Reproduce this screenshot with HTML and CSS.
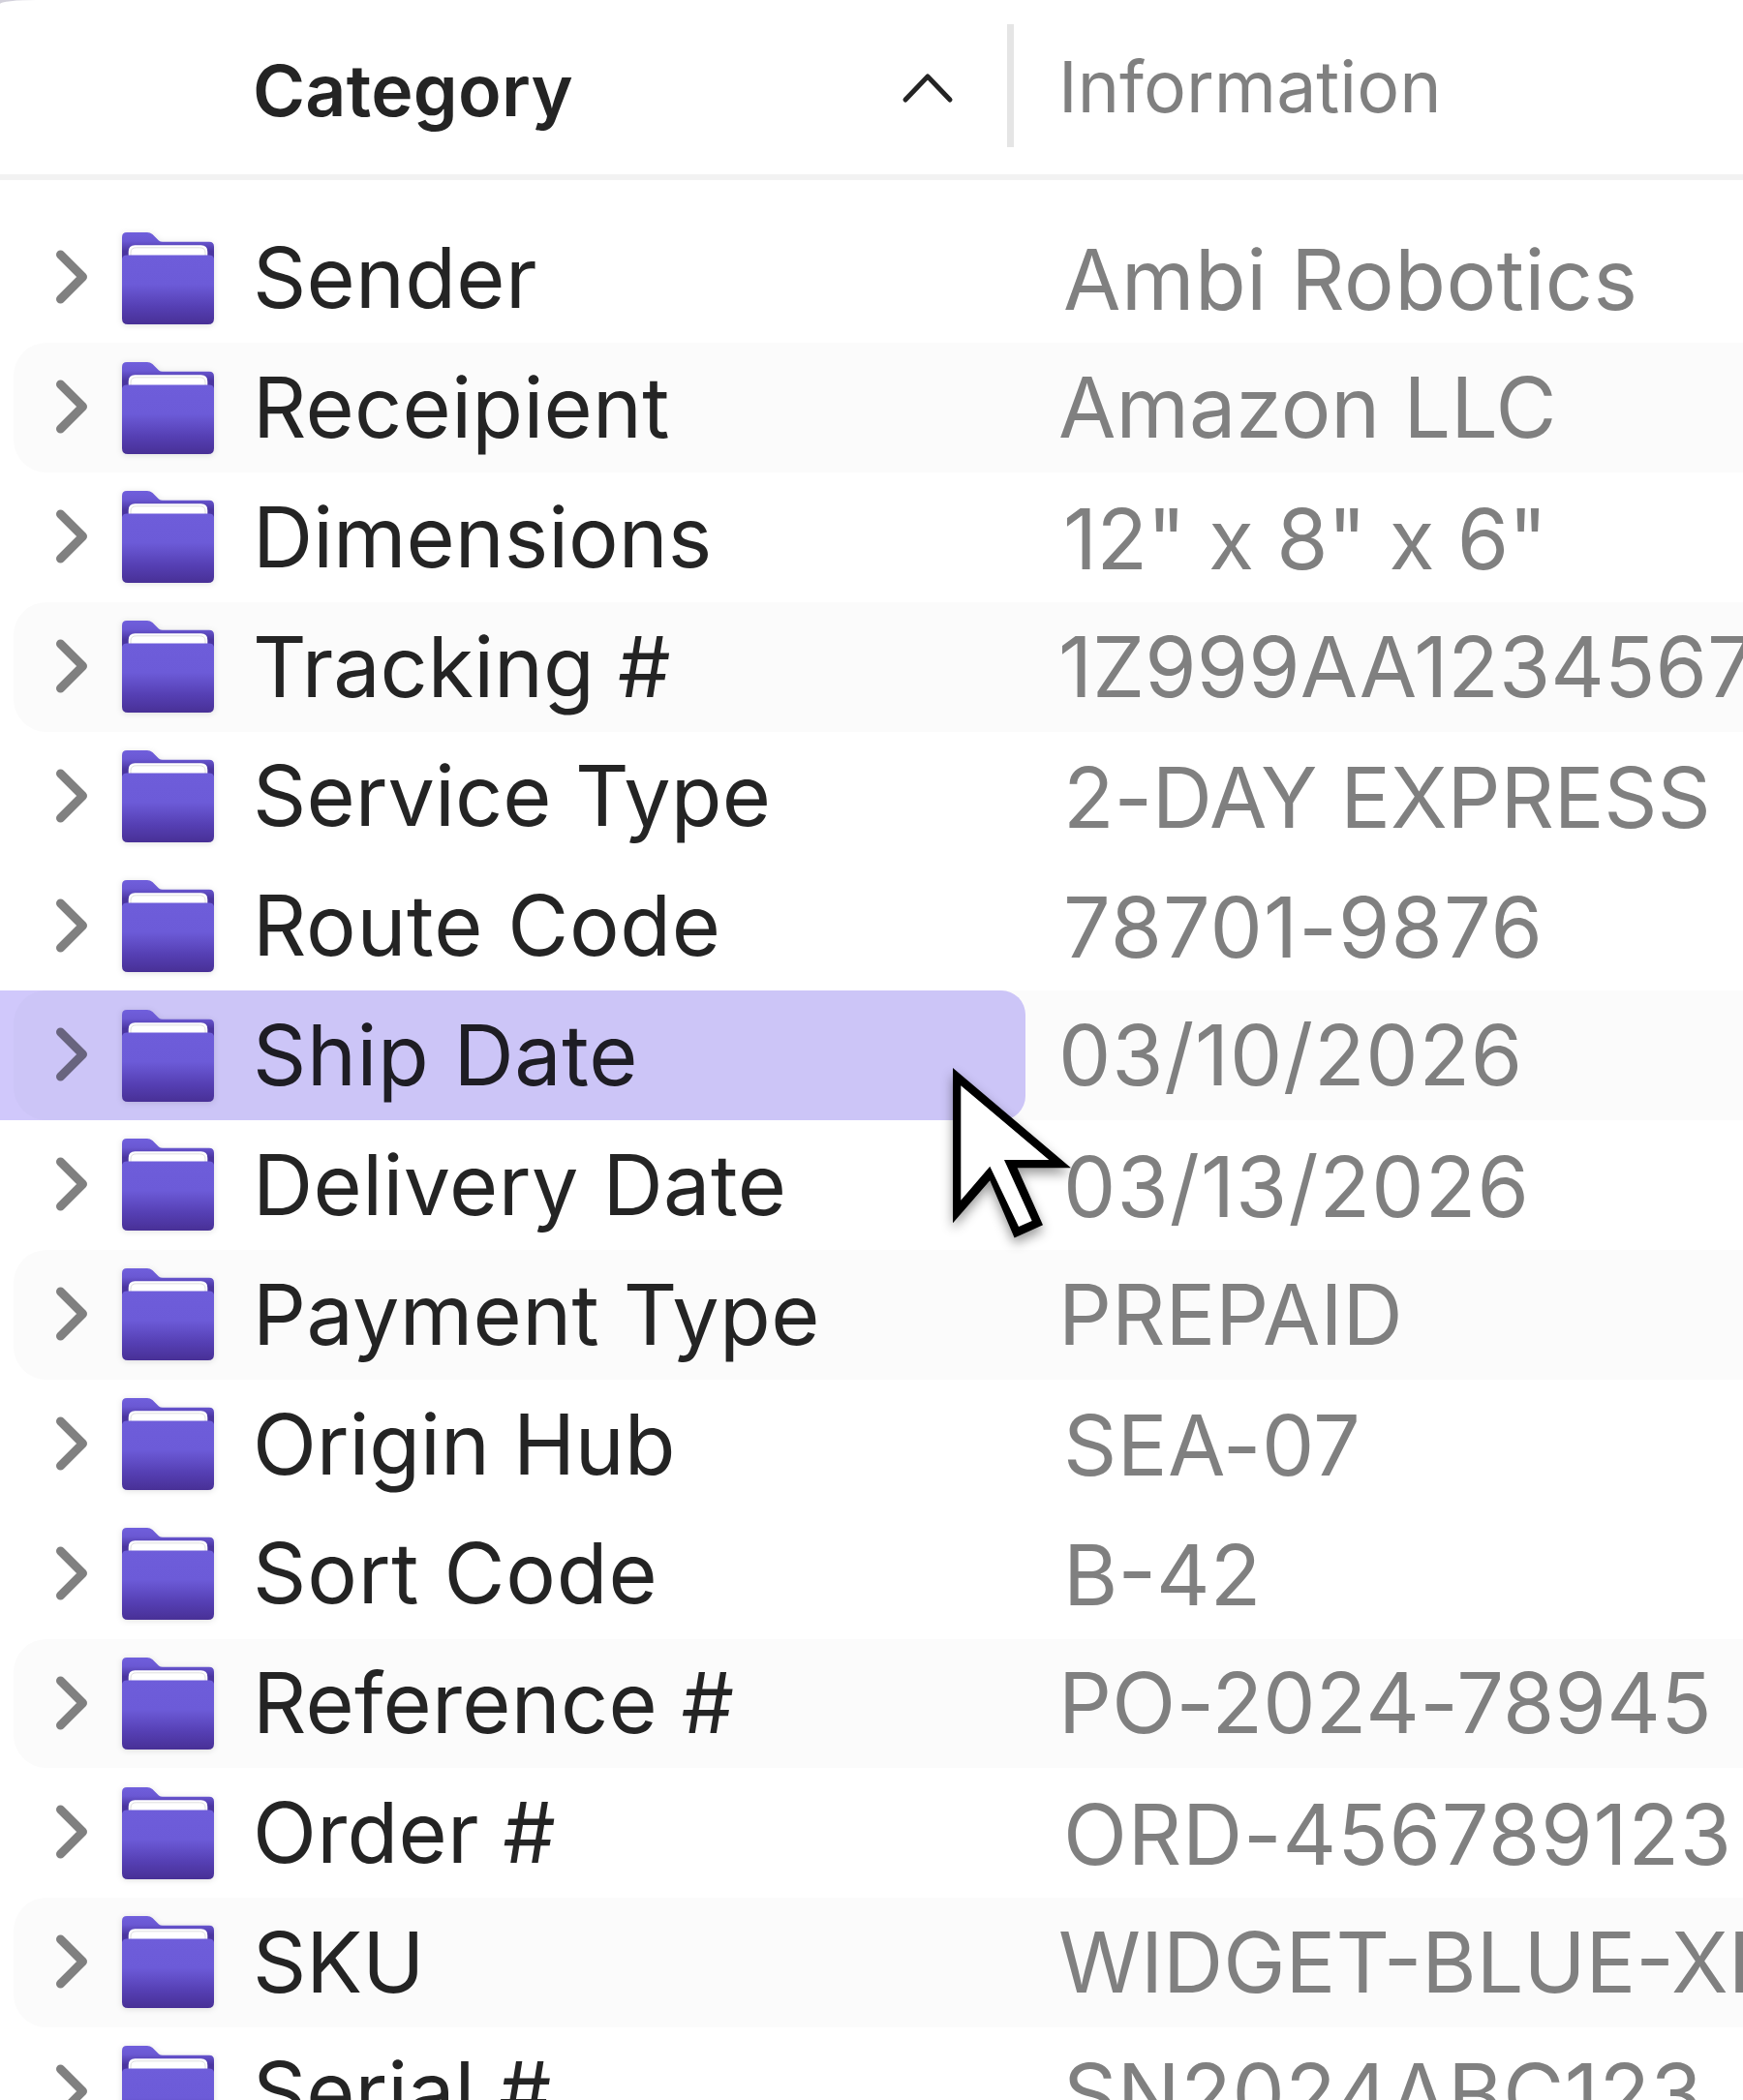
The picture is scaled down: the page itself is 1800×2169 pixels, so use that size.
FILE: index.html
```html
<!DOCTYPE html>
<html lang="en">
<head>
    <meta charset="UTF-8">
    <meta name="viewport" content="width=device-width, initial-scale=1.0">
    <title>Shipment details</title>
    <link rel="stylesheet" href="styles.css">
</head>
<body>
    <!-- shared icons -->
    <svg class="sprite" width="0" height="0">
        <defs>
            <linearGradient id="back" x1="0" y1="0" x2="0" y2="1">
                <stop offset="0" stop-color="#705fdc"/>
                <stop offset="0.3" stop-color="#6a58d3"/>
                <stop offset="0.65" stop-color="#4a35a0"/>
            </linearGradient>
            <linearGradient id="front" x1="0" y1="0" x2="0" y2="1">
                <stop offset="0" stop-color="#6e5dda"/>
                <stop offset="0.42" stop-color="#6c5bd8"/>
                <stop offset="0.75" stop-color="#553fb3"/>
                <stop offset="1" stop-color="#483096"/>
            </linearGradient>
            <symbol id="chevron" viewBox="0 0 34 58">
                <path d="M5.5 6 L28.5 29 L5.5 52" fill="none" stroke="currentColor" stroke-width="9" stroke-linecap="round" stroke-linejoin="round"/>
            </symbol>
            <symbol id="folder" viewBox="0 0 95 95">
                <path d="M0 30 V5 Q0 0 5 0 H26 Q29 0 31.500 2 L38 8.500 Q39.500 9.700 42 9.700 H90 Q95 9.700 95 14.700 V30 Z" fill="url(#back)"/>
                <path d="M6.700 30 V20 Q6.700 13.300 13.400 13.300 H81.600 Q88.300 13.300 88.300 20 V30 Z" fill="#fff"/>
                <path d="M9 30 V21 Q9 15.800 14.500 15.800 H80.500 Q86 15.800 86 21 V30" fill="none" stroke="#dedede" stroke-width="1"/>
                <path d="M0 27 Q1 23.600 5 23.600 H90 Q94 23.600 95 27 V89 Q95 95 89 95 H6 Q0 95 0 89 Z" fill="url(#front)"/>
            </symbol>
        </defs>
    </svg>

    <main class="panel">
        <header class="head">
            <div class="head-category">
                <span>Category</span>
                <svg class="sort" viewBox="0 0 54 32"><path d="M4 28 L27 4 L50 28" fill="none" stroke="#242424" stroke-width="5" stroke-linecap="round" stroke-linejoin="round"/></svg>
            </div>
            <div class="head-info">Information</div>
        </header>

        <div class="rows" id="rows"></div>

        <svg class="cursor" viewBox="0 0 122 176">
            <path d="M0 0 L122 103.300 H66.600 L93 162.300 L63.600 175.600 L38.300 116.300 L0 160.300 Z" fill="#000"/>
            <path d="M8.300 18.300 L99.300 95 H53 L81.700 158 L68 164 L38.300 101.700 L8.300 136.700 Z" fill="#fff"/>
        </svg>
    </main>

    <script>
        // name, info, letter spacing of each (px), row state
        const items = [
            ["Sender", "Ambi Robotics", 0.28, 0.5],
            ["Receipient", "Amazon LLC", 0.3, 0, "shaded"],
            ["Dimensions", "12\" x 8\" x 6\"", 0, -0.5],
            ["Tracking #", "1Z999AA12345678", 0, 0.05, "shaded"],
            ["Service Type", "2-DAY EXPRESS", 0.08, -0.17],
            ["Route Code", "78701-9876", 0.75, 1.1],
            ["Ship Date", "03/10/2026", 0.65, 0.8, "shaded selected"],
            ["Delivery Date", "03/13/2026", 0.42, 1.1],
            ["Payment Type", "PREPAID", 0.37, 0, "shaded"],
            ["Origin Hub", "SEA-07", -0.08, 0.4],
            ["Sort Code", "B-42", 0.85, 0],
            ["Reference #", "PO-2024-78945", 0.25, 0.25, "shaded"],
            ["Order #", "ORD-456789123", 0.25, 0.85],
            ["SKU", "WIDGET-BLUE-XL", 0, 0, "shaded"],
            ["Serial #", "SN2024ABC123", 0, 0.55]
        ];

        document.getElementById("rows").innerHTML = items.map(([name, info, nameGap, infoGap, state = ""]) => `
            <div class="row ${state}">
                <div class="category">
                    <svg class="chevron"><use href="#chevron"/></svg>
                    <svg class="folder"><use href="#folder"/></svg>
                    <span class="name" style="letter-spacing: ${nameGap}px">${name}</span>
                </div>
                <div class="info" style="letter-spacing: ${infoGap}px">${info}</div>
            </div>`).join("");
    </script>
</body>
</html>
```
FILE: styles.css
```css
* {
    box-sizing: border-box;
}

body {
    margin: 0;
    height: 2169px;
    overflow: hidden;
    background: #d2d0da;
    font-family: Inter, "Liberation Sans", sans-serif;
    color: #242424;
}

.sprite {
    position: absolute;
}

.panel {
    position: relative;
    height: 2169px;
    overflow: hidden;
    background: #fff;
    border-top-left-radius: 38px 4px;
}

.head {
    display: flex;
    height: 186px;
    padding-top: 25px;
    border-bottom: 6px solid #f2f2f2;
    font-size: 73.4px;
    line-height: 90px;
    white-space: nowrap;
}

.head-category {
    display: flex;
    justify-content: space-between;
    width: 1047px;
    height: 127px;
    padding: 24px 55px 0 261px;
    border-right: 7px solid #e5e5e5;
    font-weight: 600;
    letter-spacing: 0.25px;
}

.sort {
    width: 54px;
    height: 32px;
    margin-top: 26px;
}

.head-info {
    padding: 20px 0 0 46px;
    color: #808080;
}

.rows {
    padding-top: 34.500px;
}

.row {
    display: flex;
    height: 133.830px;
    font-size: 86.200px;
    line-height: 104px;
    white-space: nowrap;
    isolation: isolate;
}

.shaded {
    background: #fbfbfb;
    margin-left: 14px;
    border-radius: 34px 0 0 34px;
}

.category {
    position: relative;
    display: flex;
    flex: none;
    width: 1059px;
    padding-left: 57px;
}

.shaded .category {
    width: 1045px;
    padding-left: 43px;
}

.chevron {
    width: 34px;
    height: 58px;
    margin-top: 36.900px;
    color: #808080;
}

.folder {
    position: relative;
    z-index: 2;
    width: 95px;
    height: 95px;
    margin: 19.200px 0 0 35px;
    filter: drop-shadow(0 1px 3px rgba(0, 0, 0, 0.12));
}

.name {
    padding: 14.600px 0 0 40px;
}

.info {
    padding: 16.500px 0 0 39px;
    color: #808080;
}

.shaded .info {
    padding: 14.600px 0 0 34px;
}

/* highlight tints the row and its text, the folder stays on top */
.selected .category::after {
    content: "";
    position: absolute;
    z-index: 1;
    top: 0;
    left: -14px;
    width: 1059px;
    height: 100%;
    background: #d0c8fb;
    border-radius: 0 25px 25px 0;
    mix-blend-mode: multiply;
}

.cursor {
    position: absolute;
    z-index: 3;
    left: 984.300px;
    top: 1102.500px;
    width: 122px;
    height: 176px;
    overflow: visible;
    filter: drop-shadow(0 6px 6px rgba(0, 0, 0, 0.4));
}
```
